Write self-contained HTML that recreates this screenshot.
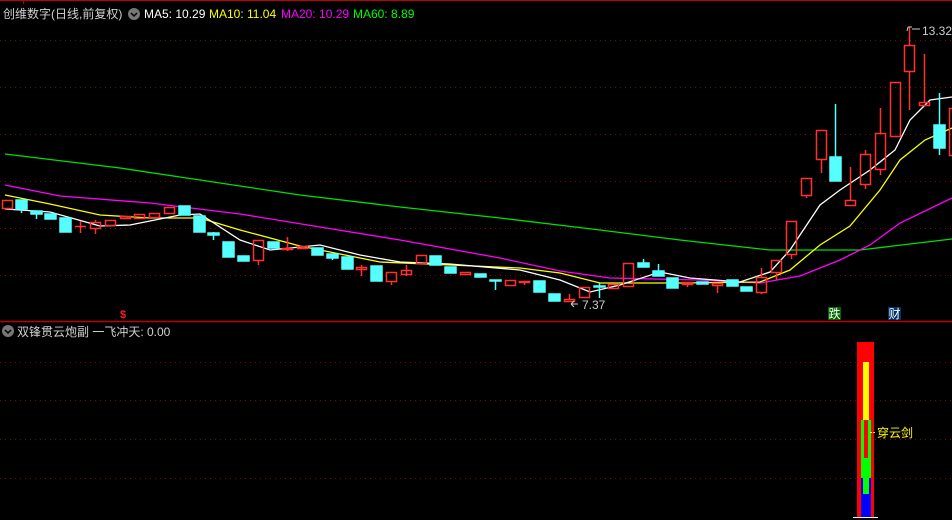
<!DOCTYPE html>
<html><head><meta charset="utf-8"><style>
html,body{margin:0;padding:0;background:#000;width:952px;height:520px;overflow:hidden}
svg{display:block}
text{font-family:"Liberation Sans","Noto Sans CJK SC",sans-serif}
</style></head><body>
<svg width="952" height="520" viewBox="0 0 952 520" xmlns="http://www.w3.org/2000/svg">
<rect width="952" height="520" fill="#000"/>
<line x1="0" y1="0.5" x2="952" y2="0.5" stroke="#c00000"/>
<line x1="23.5" y1="0" x2="23.5" y2="4" stroke="#c00000"/>
<g stroke="#8b0000" stroke-dasharray="1,4" stroke-width="1">
<line x1="0" y1="40.5" x2="952" y2="40.5"/><line x1="0" y1="87.5" x2="952" y2="87.5"/>
<line x1="0" y1="134.5" x2="952" y2="134.5"/><line x1="0" y1="181.5" x2="952" y2="181.5"/>
<line x1="0" y1="228.5" x2="952" y2="228.5"/><line x1="0" y1="275.5" x2="952" y2="275.5"/>
<line x1="0" y1="362.5" x2="952" y2="362.5"/><line x1="0" y1="400.5" x2="952" y2="400.5"/>
<line x1="0" y1="439.5" x2="952" y2="439.5"/><line x1="0" y1="478.5" x2="952" y2="478.5"/>
</g>
<!-- header -->
<text x="3" y="18" font-size="12" fill="#d0d0d0">创维数字(日线,前复权)</text>
<circle cx="134" cy="14" r="6" fill="#777"/><path d="M131 13l3 3 3-3" stroke="#000" stroke-width="1.5" fill="none"/>
<text x="144" y="18" font-size="12" fill="#fff">MA5: 10.29</text>
<text x="209" y="18" font-size="12" fill="#ffff00">MA10: 11.04</text>
<text x="281" y="18" font-size="12" fill="#ff00ff">MA20: 10.29</text>
<text x="353" y="18" font-size="12" fill="#00ff00">MA60: 8.89</text>
<!-- MAs -->
<g fill="none" stroke-width="1.3">
<polyline stroke="#00e000" points="5,154 120,168 200,180 300,195 400,207 500,218 600,230 680,240 770,250 860,250 952,239"/>
<polyline stroke="#ff00ff" points="5,185 60,196 150,203 240,214 320,227 400,240 500,258 560,271 610,278 700,280 760,283 800,276 840,260 870,245 900,223 952,198"/>
<polyline stroke="#ffff00" points="5,195 50,204 100,215 150,218 200,218 240,230 300,246 380,262 450,265 520,268 560,273 600,283 680,283 760,282 790,270 820,245 850,226 880,190 900,160 925,140 952,128"/>
<polyline stroke="#ffffff" points="5,209 50,212 100,226 130,225 180,215 200,214 240,240 270,250 320,245 360,255 400,262 450,264 520,270 560,280 590,292 620,285 660,272 690,278 740,282 770,272 790,250 820,205 840,190 870,170 895,150 910,120 930,100 952,97"/>
</g>
<!-- candles -->
<g stroke-width="1.5">
<g stroke="#ff3030" fill="none">
<path d="M2.5 200.5h10v8h-10z"/>
<path d="M80.5 221v12M75 226.5h11"/>
<path d="M90.5 222.5h10v6h-10zM95.5 220v2M95.5 228v6"/>
<path d="M105.5 220.5h10v5h-10z"/>
<path d="M120.5 216.5h10v2h-10z"/><path d="M134.5 214.5h10v4h-10z"/><path d="M149.5 213.5h10v4h-10z"/><path d="M164.5 207.5h10v6h-10z"/>
<path d="M253.5 240.5h10v20h-10zM258.5 260v5"/>
<path d="M282.5 248.5h10v1h-10zM287.5 237v14"/><path d="M297.5 246.5h10v2h-10z"/>
<path d="M356.5 267.5h10v2h-10zM361.5 265v11"/>
<path d="M386.5 272.5h10v9h-10zM391.5 281v4"/>
<path d="M401.5 270.5h10v4h-10zM406.5 265v11"/>
<path d="M416.5 255.5h10v8h-10z"/><path d="M460.5 272.5h10v2h-10z"/>
<path d="M505.5 280.5h10v5h-10z"/><path d="M519.5 281.5h10v1h-10zM524.5 282v3"/>
<path d="M564.5 299.5h10v2h-10zM569.5 294v5"/><path d="M579.5 287.5h10v10h-10z"/>
<path d="M608.5 284.5h10v4h-10z"/><path d="M623.5 263.5h10v23h-10z"/>
<path d="M682.5 282.5h10v2h-10zM687.5 284v3"/><path d="M712.5 283.5h10v2h-10zM717.5 285v8"/>
<path d="M756.5 277.5h10v15h-10zM761.5 268v9M761.5 292v2"/>
<path d="M771.5 260.5h10v12h-10zM776.5 272v8"/>
<path d="M786.5 221.5h10v33h-10zM791.5 254v5"/>
<path d="M801.5 178.5h10v17h-10zM806.5 195v3"/>
<path d="M816.5 130.5h10v29h-10zM821.5 159v14"/>
<path d="M845.5 200.5h10v5h-10zM850.5 167v33"/>
<path d="M860.5 154.5h10v30h-10zM865.5 150v4M865.5 184v5"/>
<path d="M875.5 133.5h10v36h-10zM880.5 108v25M880.5 169v6"/>
<path d="M890.5 82.5h10v54h-10z"/>
<path d="M904.5 45.5h10v26h-10zM909.5 27v18M909.5 71v39"/>
<path d="M919.5 102.5h10v3h-10zM924.5 54v48"/>
<path d="M949.5 108.5h10v47h-10z"/>
</g>
<g fill="#55ffff" stroke="#55ffff">
<path d="M16 200h11v9H16zM21.5 209v4"/><path d="M31 211h11v3H31zM36.5 214v5"/>
<path d="M45 214h11v5H45z"/><path d="M60 218h11v14H60z"/>
<path d="M179 206h11v9h-11z"/><path d="M194 216h11v16h-11z"/>
<path d="M208 233h11v2h-11zM213.5 232v8"/><path d="M223 242h11v15h-11z"/>
<path d="M238 256h11v5h-11z"/><path d="M268 242h11v6h-11z"/>
<path d="M312 248h11v7h-11z"/><path d="M327 254h11v4h-11zM332.5 258v2"/>
<path d="M342 257h11v12h-11z"/><path d="M371 266h11v15h-11z"/>
<path d="M430 256h11v9h-11z"/><path d="M445 267h11v6h-11z"/>
<path d="M475 274h11v3h-11z"/><path d="M490 280h11v1h-11zM495.5 281v9"/>
<path d="M534 281h11v11h-11z"/><path d="M549 294h11v7h-11z"/>
<path d="M594 286h11v1h-11zM599.5 283v15"/>
<path d="M638 263h11v4h-11zM643.5 259v4"/><path d="M653 271h11v5h-11zM658.5 264v7"/>
<path d="M667 278h11v10h-11z"/><path d="M697 282h11v2h-11z"/>
<path d="M727 280h11v6h-11z"/><path d="M741 287h11v4h-11z"/>
<path d="M830 157h11v24h-11zM835.5 104v53"/>
<path d="M934 125h11v23h-11zM939.5 93v32M939.5 148v7"/>
</g>
</g>
<!-- labels -->
<path d="M908 27l-1 4M908 27h4M912 29h8" stroke="#ccc" fill="none"/>
<text x="922" y="35" font-size="12" fill="#ccc">13.32</text>
<path d="M578 304h-7M571 304l3-3M571 304l3 3" stroke="#ccc" fill="none"/>
<text x="582" y="309" font-size="12" fill="#ccc">7.37</text>
<text x="120" y="318" font-size="11" fill="#ff2020" font-weight="bold">$</text>
<rect x="828" y="307" width="13" height="13" fill="#006600"/>
<text x="828.5" y="318" font-size="12" fill="#fff">跌</text>
<rect x="888" y="307" width="13" height="13" fill="#003366"/>
<text x="888.5" y="318" font-size="12" fill="#fff">财</text>
<line x1="0" y1="321.5" x2="952" y2="321.5" stroke="#c00000" stroke-width="1.5"/>
<!-- lower -->
<circle cx="8" cy="331" r="6" fill="#777"/><path d="M5 330l3 3 3-3" stroke="#000" stroke-width="1.5" fill="none"/>
<text x="17" y="336" font-size="12" fill="#d0d0d0">双锋贯云炮副 一飞冲天: 0.00</text>
<rect x="857" y="342" width="17" height="175" fill="#ff0000"/>
<rect x="863" y="362" width="6" height="58" fill="#ffff00"/>
<rect x="861" y="420" width="10" height="58" fill="#00ff00"/>
<rect x="864" y="420" width="4" height="38" fill="#ff0000"/>
<rect x="861" y="478" width="10" height="39" fill="#0000ff"/>
<rect x="863" y="478" width="6" height="16" fill="#00ff00"/>
<path d="M853 517.5h25" stroke="#fff"/>
<path d="M870 432.5h6" stroke="#ffff00" stroke-dasharray="2,1"/>
<text x="877" y="437" font-size="12" fill="#ffff00">穿云剑</text>
</svg>
</body></html>
